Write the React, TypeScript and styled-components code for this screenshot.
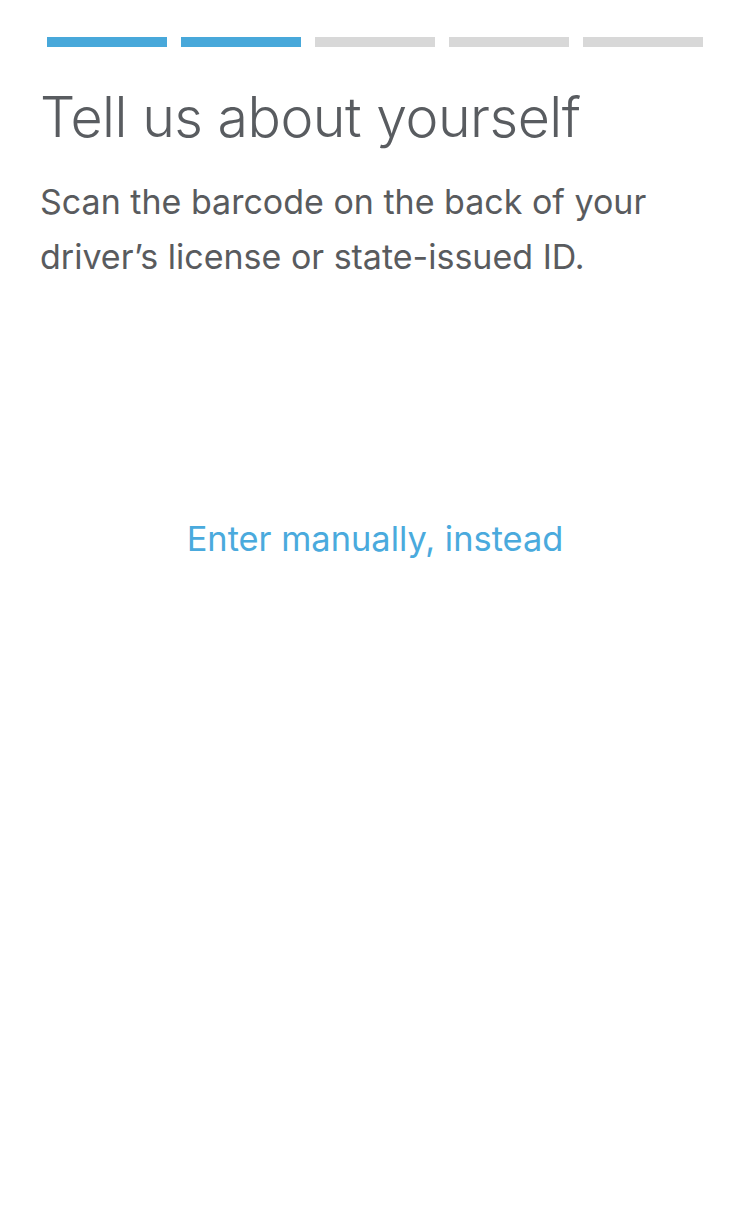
import React from 'react';
import styled, { createGlobalStyle } from 'styled-components';

const GlobalStyle = createGlobalStyle`
    html, body {
        margin: 0;
        padding: 0;
        background: #ffffff;
    }
    body {
        font-family: 'Liberation Sans', Arial, sans-serif;
    }
`;

const STEPS = 5;
const CURRENT = 2;

const App = () => {
    return (
        <>
            <GlobalStyle />
            <Page>
                <Progress>
                    {Array.from({ length: STEPS }).map((_, i) => (
                        <Segment key={i} active={i < CURRENT} />
                    ))}
                </Progress>
                <Content>
                    <Title>Tell us about yourself</Title>
                    <Subtitle>
                        Scan the barcode on the back of your driver’s license or state-issued ID.
                    </Subtitle>
                    <ManualLink href="#">Enter manually, instead</ManualLink>
                </Content>
            </Page>
        </>
    );
};

const Page = styled.div`
    width: 750px;
    height: 1206px;
    background: #ffffff;
    box-sizing: border-box;
    padding-top: 37px;
`;

const Progress = styled.div`
    display: flex;
    gap: 14px;
    padding: 0 47px;
`;

const Segment = styled.div<{ active: boolean }>`
    flex: 1;
    height: 10px;
    background: ${p => p.active ? '#48a8da' : '#d8d8d8'};
`;

const Content = styled.div`
    display: flex;
    flex-direction: column;
    padding: 0 40px;
`;

const Title = styled.h1`
    margin: 34px 0 0;
    font-family: 'Inter', 'Liberation Sans', sans-serif;
    font-weight: 300;
    font-size: 55.5px;
    line-height: 72px;
    color: #595c60;
    letter-spacing: -0.5px;
`;

const Subtitle = styled.p`
    margin: 21px 0 0;
    font-family: 'Inter', 'Liberation Sans', sans-serif;
    font-weight: 400;
    font-size: 34px;
    line-height: 55px;
    color: #595b5e;
    max-width: 650px;
`;

const ManualLink = styled.a`
    align-self: center;
    margin-top: 235px;
    font-family: 'Inter', 'Liberation Sans', sans-serif;
    font-size: 34.4px;
    line-height: 40px;
    color: #4aaadd;
    text-decoration: none;
`;

export default App;
